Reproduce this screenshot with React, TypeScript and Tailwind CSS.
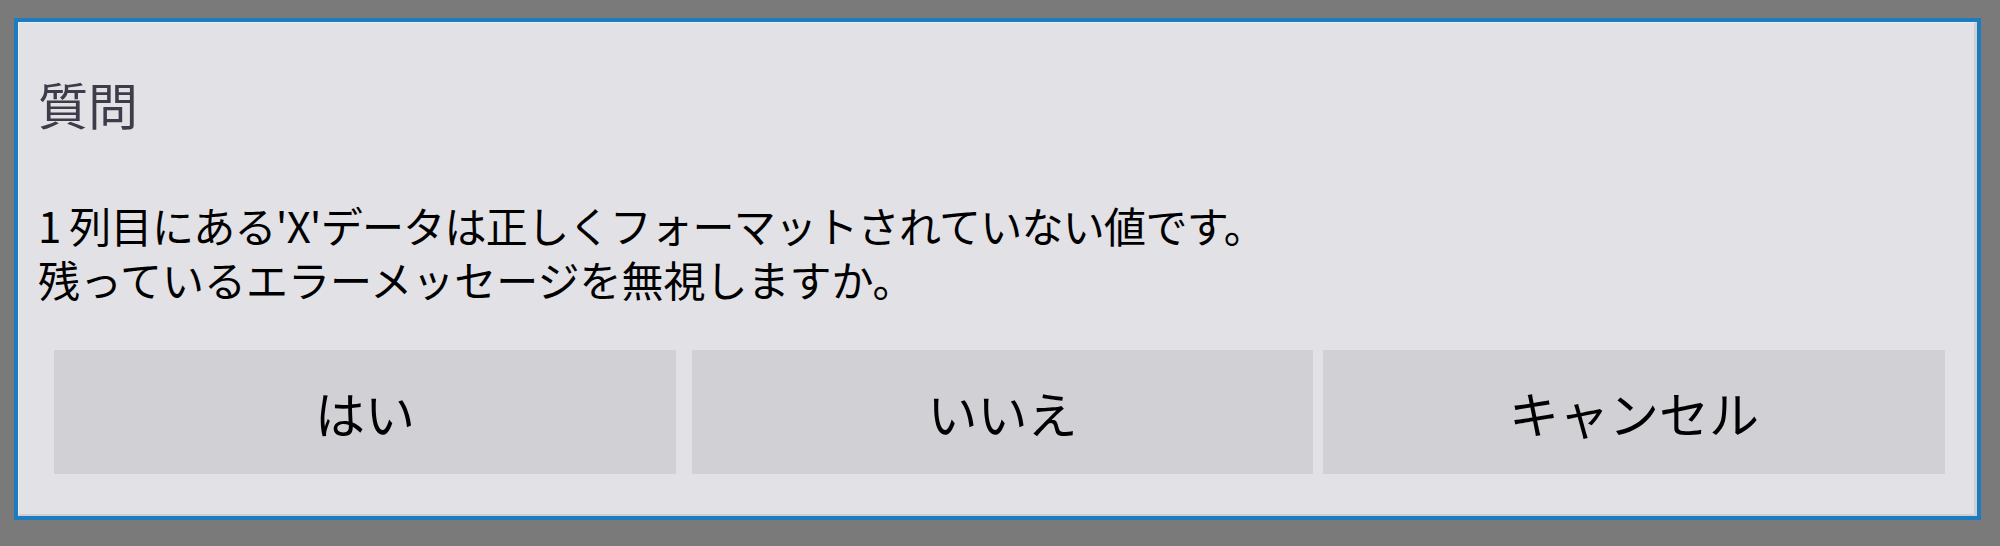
export default function App() {
  const buttons = ["はい", "いいえ", "キャンセル"];

  return (
    <div className="w-[2000px] h-[546px] bg-[#7a7a7a] pt-[18px] pl-[14px] font-['Noto_Sans_CJK_JP',sans-serif]">
      <div className="w-[1967px] h-[502px] border-4 border-[#1b7cc0] bg-[#e2e1e6]">
        <div className="h-full border-t border-l border-[#eeedf1] border-r-[3px] border-r-[#cfced3] border-b-[2px] border-b-[#cfced3] pl-[19px] pt-[44px]">
          <h2 className="text-[50px] leading-[72px] text-[#3c3c4a]">質問</h2>

          <div className="mt-[59px] text-[42px] leading-[54px] text-black">
            <p className="tracking-[-0.7px]">1 列目にある'X'データは正しくフォーマットされていない値です。</p>
            <p>残っているエラーメッセージを無視しますか。</p>
          </div>

          <div className="flex mt-[44px] ml-[16px]">
            {buttons.map((label, i) => (
              <button
                key={label}
                className={`h-[124px] ${i === 1 ? "w-[621px]" : "w-[622px]"} ${
                  i === 1 ? "ml-[16px]" : i === 2 ? "ml-[10px]" : ""
                } bg-[#d0d0d5] text-[50px] text-black flex items-center justify-center`}
              >
                {label}
              </button>
            ))}
          </div>
        </div>
      </div>
    </div>
  );
}
